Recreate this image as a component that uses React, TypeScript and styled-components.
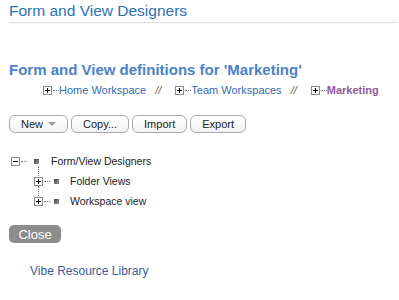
import styled, { createGlobalStyle } from "styled-components";

type TreeNode = { label: string; children?: TreeNode[] };

const crumbs = [
  { title: "Home Workspace", current: false },
  { title: "Team Workspaces", current: false },
  { title: "Marketing", current: true },
];

const tree: TreeNode = {
  label: "Form/View Designers",
  children: [{ label: "Folder Views" }, { label: "Workspace view" }],
};

const GlobalStyle = createGlobalStyle`
  body {
    margin: 0;
    background: #fff;
    font-family: "Liberation Sans", Arial, sans-serif;
  }
`;

export default function App() {
  return (
    <>
      <GlobalStyle />
      <Page>
        <PageHeader>Form and View Designers</PageHeader>
        <Title>Form and View definitions for 'Marketing'</Title>
        <Breadcrumbs>
          {crumbs.map((crumb, i) => (
            <Crumb key={crumb.title}>
              {i > 0 && <Separator>//</Separator>}
              <Expander $open={false} />
              <Dots />
              <CrumbLink $current={crumb.current}>{crumb.title}</CrumbLink>
            </Crumb>
          ))}
        </Breadcrumbs>
        <Toolbar>
          <Button>
            New
            <Caret />
          </Button>
          <Button>Copy...</Button>
          <Button>Import</Button>
          <Button>Export</Button>
        </Toolbar>
        <Tree>
          <TreeRow $depth={0}>
            <Expander $open={true} />
            <Dots />
            <NodeIcon />
            <NodeLabel>{tree.label}</NodeLabel>
          </TreeRow>
          {tree.children?.map((child) => (
            <TreeRow key={child.label} $depth={1}>
              <Expander $open={false} $linked />
              <Dots />
              <NodeIcon />
              <NodeLabel>{child.label}</NodeLabel>
            </TreeRow>
          ))}
        </Tree>
        <CloseButton>Close</CloseButton>
        <FooterLink>Vibe Resource Library</FooterLink>
      </Page>
    </>
  );
}

const Page = styled.div`
  padding: 2px 1px 0 9px;
  display: flex;
  flex-direction: column;
  align-items: flex-start;
`;

const PageHeader = styled.div`
  align-self: stretch;
  font-size: 15.5px;
  line-height: 18px;
  color: #2d72b6;
  padding-bottom: 2px;
  border-bottom: 1px solid #dcdcdc;
`;

const Title = styled.div`
  margin-top: 38px;
  font-size: 15px;
  font-weight: bold;
  line-height: 18px;
  color: #4b82c8;
`;

const Breadcrumbs = styled.div`
  margin-top: 4px;
  margin-left: 34px;
  display: flex;
  align-items: center;
  font-size: 11px;
  line-height: 14px;
`;

const Crumb = styled.div`
  display: flex;
  align-items: center;
`;

const Separator = styled.span`
  color: #6b5636;
  font-style: italic;
  margin: 0 14px 0 9px;
`;

const CrumbLink = styled.span<{ $current: boolean }>`
  color: ${(p) => (p.$current ? "#8d5a9d" : "#2f6db3")};
  font-weight: ${(p) => (p.$current ? "bold" : "normal")};
`;

const Expander = styled.span<{ $open: boolean; $linked?: boolean }>`
  position: relative;
  flex: none;
  width: 7px;
  height: 7px;
  border: 1px solid #8a8a8a;
  background:
    linear-gradient(#000, #000) center / 5px 1px no-repeat,
    ${(p) =>
      p.$open
        ? "linear-gradient(transparent, transparent)"
        : "linear-gradient(#000, #000) center / 1px 5px no-repeat"},
    #fff;

  &::before {
    content: "";
    display: ${(p) => (p.$linked ? "block" : "none")};
    position: absolute;
    left: 3px;
    bottom: 9px;
    height: 10px;
    border-left: 1px dotted #777;
  }
`;

const Dots = styled.span`
  flex: none;
  width: 6px;
  margin-left: 1px;
  border-top: 1px dotted #777;
`;

const Toolbar = styled.div`
  margin-top: 18px;
  display: flex;
  gap: 3px;
`;

const Button = styled.button`
  display: flex;
  align-items: center;
  gap: 5px;
  height: 18px;
  padding: 0 11px;
  border: 1px solid #a8a8a8;
  border-radius: 6px;
  background: linear-gradient(#fff, #f3f3f3);
  font-family: "Liberation Sans", Arial, sans-serif;
  font-size: 11px;
  color: #222;
`;

const Caret = styled.span`
  width: 0;
  height: 0;
  border-left: 4px solid transparent;
  border-right: 4px solid transparent;
  border-top: 4px solid #9a9a9a;
`;

const Tree = styled.div`
  margin-top: 18px;
  display: flex;
  flex-direction: column;
`;

const NodeIcon = styled.span`
  flex: none;
  width: 5px;
  height: 5px;
  margin-left: 7px;
  background: linear-gradient(135deg, #444, #999);
`;

const NodeLabel = styled.span`
  margin-left: 12px;
  font-size: 10.5px;
  color: #222;
`;

const TreeRow = styled.div<{ $depth: number }>`
  display: flex;
  align-items: center;
  height: 20px;
  padding-left: ${(p) => 2 + p.$depth * 23}px;

  ${NodeIcon} {
    margin-left: ${(p) => (p.$depth ? 4 : 7)}px;
  }

  ${NodeLabel} {
    margin-left: ${(p) => (p.$depth ? 11 : 12)}px;
  }
`;

const CloseButton = styled.button`
  margin-top: 14px;
  width: 52px;
  height: 18px;
  padding: 0;
  border: none;
  border-radius: 5px;
  background: #8c8c8c;
  color: #fff;
  font-family: "Liberation Sans", Arial, sans-serif;
  font-size: 13px;
`;

const FooterLink = styled.a`
  margin-top: 21px;
  margin-left: 21px;
  font-size: 12px;
  color: #3a5c9a;
  cursor: pointer;
`;
